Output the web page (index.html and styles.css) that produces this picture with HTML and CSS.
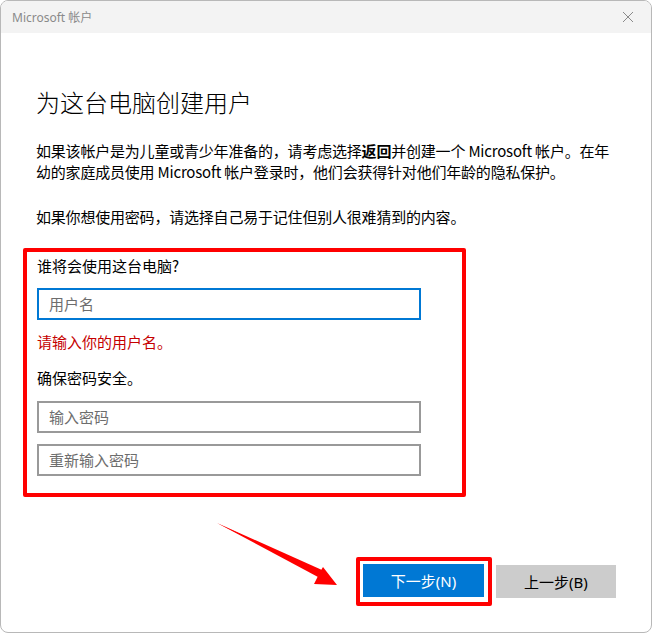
FILE: index.html
```html
<!DOCTYPE html>
<html lang="zh-CN">
<head>
<meta charset="utf-8">
<title>Microsoft 帐户</title>
<link rel="stylesheet" href="styles.css">
</head>
<body>
<div class="window">
  <div class="titlebar">
    <span class="title">Microsoft 帐户</span>
    <svg class="close" width="12" height="12" viewBox="0 0 12 12"><path d="M1 1L11 11M11 1L1 11" stroke="#8a8a8a" stroke-width="1" fill="none"/></svg>
  </div>
  <div class="content">
    <h1 class="heading">为这台电脑创建用户</h1>
    <p class="para">如果该帐户是为儿童或青少年准备的，请考虑选择<b>返回</b>并创建一个 Microsoft 帐户。在年<br>幼的家庭成员使用 Microsoft 帐户登录时，他们会获得针对他们年龄的隐私保护。</p>
    <p class="para para-2">如果你想使用密码，请选择自己易于记住但别人很难猜到的内容。</p>
    <div class="highlight form">
      <div class="label">谁将会使用这台电脑?</div>
      <div class="input input-focus">用户名</div>
      <div class="error">请输入你的用户名。</div>
      <div class="label label-2">确保密码安全。</div>
      <div class="input input-pw">输入密码</div>
      <div class="input input-pw input-pw2">重新输入密码</div>
    </div>
  </div>
  <div class="footer">
    <div class="highlight next-wrap"><button class="btn btn-primary">下一步(N)</button></div>
    <button class="btn btn-secondary">上一步(B)</button>
  </div>
  <svg class="arrow" width="130" height="70" viewBox="210 518 130 70">
    <polygon points="217,523 319,574 314,584 337,585 323,567 320,572" fill="#ff0000"/>
    <polygon points="217,523 322,570 318,577" fill="#ff0000"/>
  </svg>
</div>
</body>
</html>
```
FILE: styles.css
```css
* { box-sizing: border-box; }
html, body { margin: 0; padding: 0; background: #ffffff; }
body {
  font-family: "Noto Sans CJK SC", sans-serif;
  color: #000;
}
.window {
  position: relative;
  width: 652px;
  height: 633px;
  border: 1px solid #b8b8b8;
  border-radius: 8px;
  overflow: hidden;
  background: #fff;
}
.titlebar {
  height: 32px;
  background: #f3f3f3;
  display: flex;
  align-items: center;
  justify-content: space-between;
  padding: 0 17px 0 11px;
}
.title {
  font-size: 12px;
  color: #8a8a8a;
  font-family: "Noto Sans", "Noto Sans CJK SC", sans-serif;
}
.close { display: block; }
.content {
  padding: 0 0 0 35px;
}
.heading {
  margin: 53px 0 0 0;
  font-size: 24px;
  font-weight: 300;
  line-height: 32px;
  font-family: "Noto Sans CJK SC", sans-serif;
}
.para {
  margin: 22px 0 0 0;
  font-size: 15px;
  line-height: 21px;
  width: 600px;
  letter-spacing: -0.2px;
}
.para b { font-weight: 700; }
.para-2 { margin-top: 24px; }
.highlight {
  border: 4px solid #ff0000;
  border-radius: 2px;
}
.form {
  margin: 21px 0 0 -13px;
  width: 443px;
  height: 249px;
  padding: 2px 0 0 10px;
}
.label {
  font-size: 15px;
  line-height: 24px;
}
.input {
  width: 384px;
  height: 32px;
  border: 2px solid #999999;
  padding: 0 10px;
  font-size: 15px;
  line-height: 28px;
  color: #6d6d6d;
}
.input-focus {
  margin-top: 10px;
  border-color: #0078d4;
}
.error {
  margin-top: 10px;
  font-size: 15px;
  line-height: 24px;
  color: #c50000;
}
.label-2 { margin-top: 12px; }
.input-pw { margin-top: 11px; }
.input-pw2 { margin-top: 11px; }
.footer {
  position: absolute;
  right: 35px;
  bottom: 26px;
  display: flex;
  align-items: center;
  gap: 4px;
}
.next-wrap {
  padding: 3px 4px 5px 3px;
}
.btn {
  display: block;
  height: 33px;
  border: none;
  font-family: "Noto Sans", "Noto Sans CJK SC", sans-serif;
  font-size: 15px;
  padding: 0;
}
.btn-primary {
  width: 121px;
  background: #0078d4;
  color: #fff;
}
.btn-secondary {
  width: 120px;
  background: #cccccc;
  color: #000;
}
.arrow {
  position: absolute;
  left: 209px;
  top: 517px;
}
```
